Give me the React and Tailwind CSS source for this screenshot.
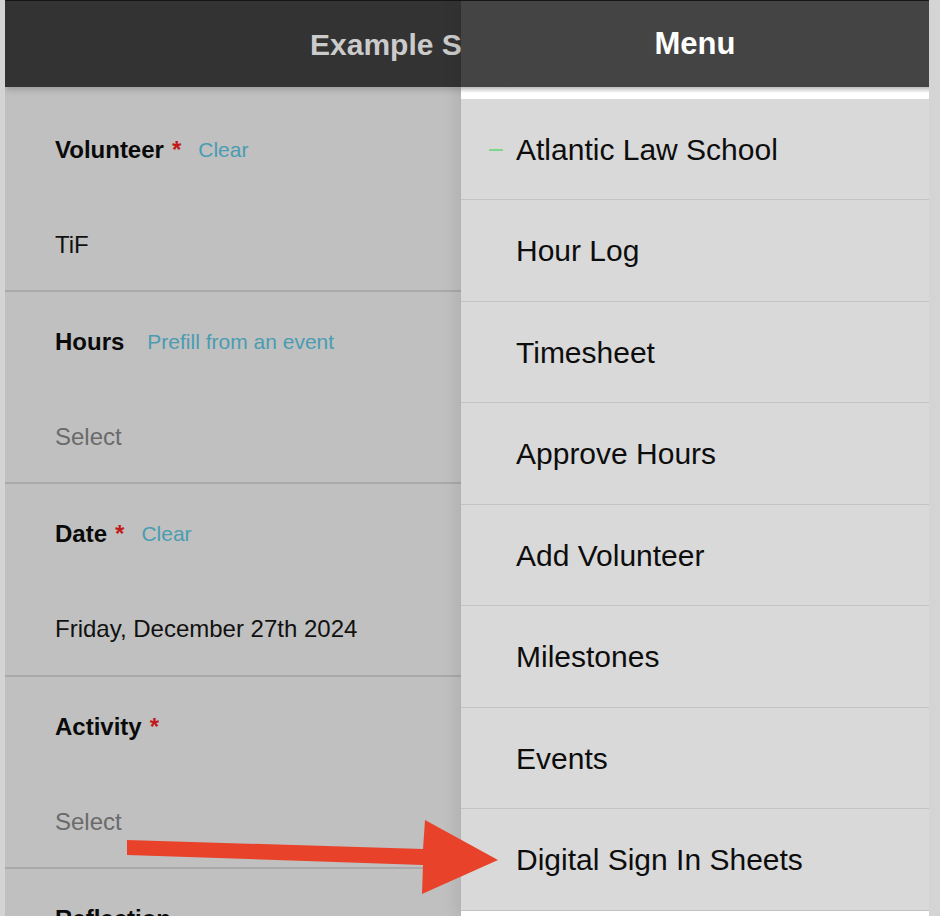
import React from 'react';

const fields = [
  { label: 'Volunteer', required: true, link: 'Clear', linkGap: 'ml-[17px]', value: 'TiF', placeholder: false, h: 'h-[192px]' },
  { label: 'Hours', required: false, link: 'Prefill from an event', linkGap: 'ml-[23px]', value: 'Select', placeholder: true, h: 'h-[192px]' },
  { label: 'Date', required: true, link: 'Clear', linkGap: 'ml-[17px]', value: 'Friday, December 27th 2024', placeholder: false, h: 'h-[193px]' },
  { label: 'Activity', required: true, link: null, value: 'Select', placeholder: true, h: 'h-[192px]' },
  { label: 'Reflection', required: false, link: null, value: '', placeholder: true, h: 'h-[192px]' },
];

const menuItems = [
  { name: 'Atlantic Law School', active: true, h: 'h-[101px]' },
  { name: 'Hour Log', h: 'h-[102px]' },
  { name: 'Timesheet', h: 'h-[101px]' },
  { name: 'Approve Hours', h: 'h-[102px]' },
  { name: 'Add Volunteer', h: 'h-[101px]' },
  { name: 'Milestones', h: 'h-[102px]' },
  { name: 'Events', h: 'h-[101px]' },
  { name: 'Digital Sign In Sheets', h: 'h-[102px]' },
];

const Field = ({ field }) => (
  <div className={`${field.h} shrink-0 border-b-2 border-[#a9a9a9] px-[50px] pt-[36px]`}>
    <div className="h-[28px] leading-[28px] flex items-center">
      <span className="text-[24px] font-bold text-[#0a0a0a] whitespace-nowrap">
        {field.label}
        {field.required && <span className="text-[#c01a1a] ml-[8px]">*</span>}
      </span>
      {field.link && (
        <span className={`${field.linkGap} text-[21px] text-[#4a9cb1] whitespace-nowrap`}>{field.link}</span>
      )}
    </div>
    <div
      className={`mt-[67px] h-[28px] leading-[28px] text-[24px] ${
        field.placeholder ? 'text-[#6a6a6a]' : 'text-[#111]'
      }`}
    >
      {field.value}
    </div>
  </div>
);

const App = () => {
  return (
    <div
      className="w-[940px] h-[916px] bg-[#d4d4d4] overflow-hidden flex relative"
      style={{ fontFamily: '"Liberation Sans", Arial, sans-serif' }}
    >
      <div className="w-[5px] shrink-0" />

      <div className="w-[924px] h-full relative border-t border-[#151515] bg-[#c0c0c0] overflow-hidden">
        {/* page under the menu */}
        <div className="h-[86px] bg-[#333333] flex items-center pl-[305px] relative z-10 shadow-[0_3px_6px_rgba(0,0,0,0.18)]">
          <span className="text-[30px] font-bold text-[#cbcbcb] whitespace-nowrap">Example School</span>
        </div>
        <div className="pt-[13px] flex flex-col">
          {fields.map((f) => (
            <Field key={f.label} field={f} />
          ))}
        </div>

        {/* slide-in menu */}
        <div className="absolute top-0 right-0 w-[468px] h-[916px] bg-white z-20 shadow-[-6px_0_14px_rgba(0,0,0,0.08)]">
          <div className="h-[86px] bg-[#444444] flex items-center justify-center">
            <span className="text-[31px] font-bold text-white">Menu</span>
          </div>
          <div className="h-[12px] bg-gradient-to-b from-[#bdbdbd] via-white to-white" />
          {menuItems.map((item) => (
            <div
              key={item.name}
              className={`${item.h} bg-[#d9d9d9] border-b border-[#c3c3c3] flex items-center relative`}
            >
              {item.active && (
                <span className="absolute left-[28px] top-1/2 w-[14px] h-[2px] bg-[#7fd68a]" />
              )}
              <span className="pl-[55px] text-[30px] text-[#0d0d0d]">{item.name}</span>
            </div>
          ))}
        </div>
      </div>

      <div className="w-[11px] shrink-0" />

      {/* annotation arrow */}
      <svg className="absolute inset-0 z-30 pointer-events-none" width="940" height="916" viewBox="0 0 940 916">
        <polygon
          points="127,840 423,849 425,820 498,860 422,894 423,865 127,855"
          fill="#e8432a"
        />
      </svg>
    </div>
  );
};

export default App;
